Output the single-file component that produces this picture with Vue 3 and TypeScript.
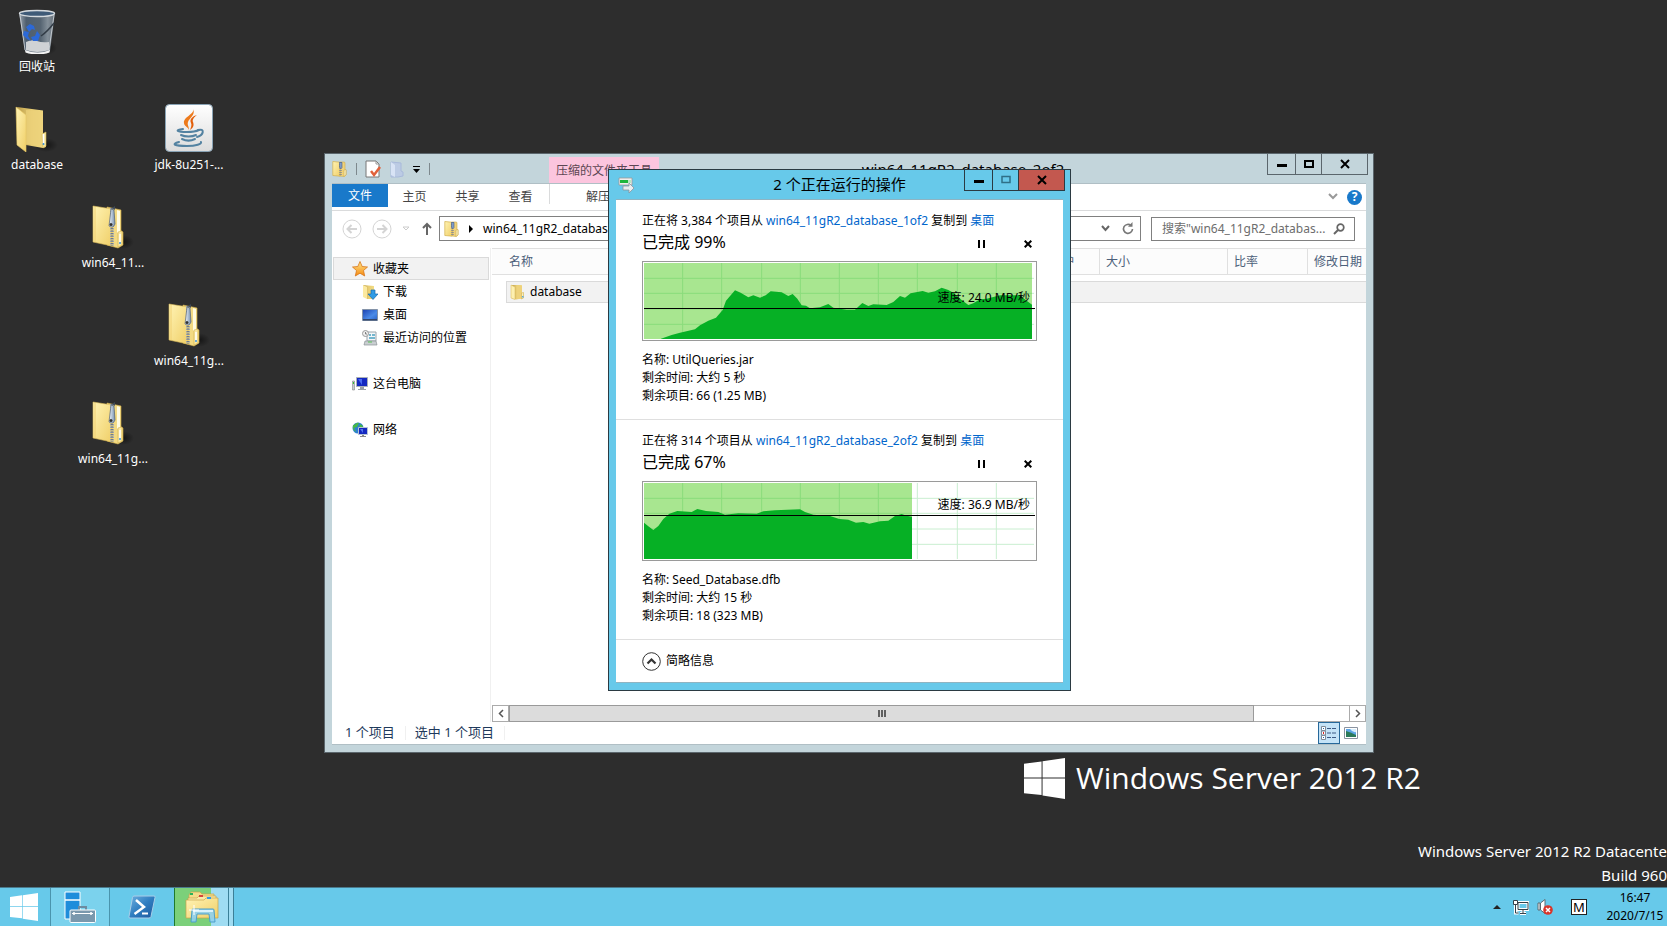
<script setup lang="ts">
import { ref } from 'vue'

interface DesktopItem {
  label: string
  icon: string
  place: string
}

interface CopyJob {
  id: string
  count: string
  source: string
  percent: number
  speed: string
  file: string
  time: string
  remaining: string
  filled: number
  average: number
  samples: [number, number][]
}

const desktopItems: DesktopItem[] = [
  { label: '回收站', icon: 'recycle', place: 'c1 r1' },
  { label: 'database', icon: 'folder', place: 'c1 r2' },
  { label: 'jdk-8u251-...', icon: 'java', place: 'c3 r2' },
  { label: 'win64_11...', icon: 'zip', place: 'c2 r3' },
  { label: 'win64_11g...', icon: 'zip', place: 'c3 r4' },
  { label: 'win64_11g...', icon: 'zip', place: 'c2 r5' },
]

const columns = [
  { name: '名称', cls: 'col-name' },
  { name: '密码保护', cls: 'col-protect' },
  { name: '大小', cls: 'col-size' },
  { name: '比率', cls: 'col-ratio' },
  { name: '修改日期', cls: 'col-date' },
]

// Chart space is 1170 x 228 units: ten columns by five rows.
const jobs: CopyJob[] = [
  {
    id: 'a',
    count: '3,384',
    source: 'win64_11gR2_database_1of2',
    percent: 99,
    speed: '24.0 MB/秒',
    file: 'UtilQueries.jar',
    time: '大约 5 秒',
    remaining: '66 (1.25 MB)',
    filled: 1164,
    average: 134,
    samples: [
      [51, 227], [83, 216], [108, 209], [153, 199], [168, 187], [193, 173], [216, 164], [236, 141],
      [246, 113], [273, 82], [290, 89], [313, 103], [328, 97], [348, 104], [365, 97], [380, 85],
      [413, 88], [433, 99], [446, 93], [460, 107], [473, 127], [486, 128], [498, 136], [528, 133],
      [553, 123], [568, 134], [608, 140], [633, 140], [655, 120], [673, 129], [688, 124], [728, 126],
      [748, 117], [768, 99], [783, 104], [800, 91], [836, 84], [853, 89], [873, 85], [893, 74],
      [913, 81], [928, 89], [953, 111], [973, 126], [988, 121], [1008, 109], [1028, 107],
      [1068, 97], [1128, 97], [1148, 113], [1164, 125],
    ],
  },
  {
    id: 'b',
    count: '314',
    source: 'win64_11gR2_database_2of2',
    percent: 67,
    speed: '36.9 MB/秒',
    file: 'Seed_Database.dfb',
    time: '大约 15 秒',
    remaining: '18 (323 MB)',
    filled: 804,
    average: 95,
    samples: [
      [0, 119], [13, 130], [28, 141], [43, 129], [58, 108], [76, 92], [100, 84], [143, 87],
      [160, 78], [186, 84], [223, 87], [243, 95], [283, 91], [338, 92], [358, 85], [393, 82],
      [468, 79], [483, 87], [508, 95], [558, 99], [586, 108], [613, 110], [636, 119], [658, 117],
      [676, 122], [708, 115], [733, 113], [753, 99], [773, 93], [788, 98], [804, 101],
    ],
  },
]

const gridX = [116, 233, 353, 469, 586, 703, 820, 940, 1057]
const gridY = [46, 91, 138, 184]
const search = ref('')

function area(job: CopyJob): string {
  const first = job.samples[0]
  const top = job.samples.map(([x, y]) => `${x},${y}`).join(' ')
  return `${first[0]},228 ${top} ${job.filled},228`
}
</script>

<template>
  <div class="screen">
    <svg class="defs" aria-hidden="true">
      <defs>
        <linearGradient id="gFront" x1="0" y1="0" x2="1" y2="1">
          <stop offset="0" stop-color="#fff3b4" /><stop offset="1" stop-color="#f0cf68" />
        </linearGradient>
        <linearGradient id="gBack" x1="0" y1="0" x2="1" y2="0">
          <stop offset="0" stop-color="#b99b4a" /><stop offset=".5" stop-color="#e8cd73" /><stop offset="1" stop-color="#f2dc86" />
        </linearGradient>
        <linearGradient id="gPull" x1="0" y1="0" x2="1" y2="0">
          <stop offset="0" stop-color="#f2f7fc" /><stop offset="1" stop-color="#7590b0" />
        </linearGradient>
        <linearGradient id="gBin" x1="0" y1="0" x2="1" y2="0">
          <stop offset="0" stop-color="#aab4be" /><stop offset=".2" stop-color="#526476" /><stop offset=".6" stop-color="#5b6b7a" /><stop offset=".8" stop-color="#8d9aa5" /><stop offset="1" stop-color="#68737e" />
        </linearGradient>
        <linearGradient id="gJava" x1="0" y1="0" x2="0" y2="1">
          <stop offset="0" stop-color="#ffffff" /><stop offset="1" stop-color="#dcdcdc" />
        </linearGradient>
        <linearGradient id="gScreen" x1="0" y1="0" x2="1" y2="1">
          <stop offset="0" stop-color="#1a3fae" /><stop offset=".6" stop-color="#4b8be8" /><stop offset="1" stop-color="#2860c8" />
        </linearGradient>
        <linearGradient id="gPs" x1="0" y1="0" x2="1" y2="1">
          <stop offset="0" stop-color="#6fb1e0" /><stop offset=".5" stop-color="#2f7dc0" /><stop offset="1" stop-color="#1c579c" />
        </linearGradient>
        <linearGradient id="gStar" x1="0" y1="0" x2="0" y2="1">
          <stop offset="0" stop-color="#ffe78a" /><stop offset="1" stop-color="#f58a12" />
        </linearGradient>
        <radialGradient id="gShade">
          <stop offset="0" stop-color="#000" stop-opacity=".55" /><stop offset="1" stop-color="#000" stop-opacity="0" />
        </radialGradient>
      </defs>
      <symbol id="folder" viewBox="0 0 48 48">
        <ellipse cx="33" cy="41" rx="12" ry="7" fill="url(#gShade)" />
        <path d="M4 3L30 6.500V29l3 1v13l-3 1-17-3z" fill="url(#gBack)" />
        <path d="M13 6l17 1v35l-17-2z" fill="#ecd27a" opacity=".7" />
        <path d="M29 30l4-2v14l-3 2z" fill="#f7e7a0" stroke="#d2b04e" stroke-width=".6" />
        <path d="M30.500 30v10" stroke="#fff" stroke-width="1.500" /><circle cx="30.500" cy="40" r="1" fill="#3a8fd0" />
        <path d="M3 3l10 8v37L4 41z" fill="url(#gFront)" stroke="#e5c663" stroke-width=".6" />
      </symbol>
      <symbol id="folder16" viewBox="0 0 16 16">
        <path d="M1.500 1h9.500l1 .5v13L6 15.500 1.500 14z" fill="url(#gBack)" />
        <path d="M6.500 1.500H12v13l-5.500.5z" fill="#eed27b" />
        <path d="M1 1l4 2v12.500L1 14z" fill="#fdf0b0" stroke="#dfc066" stroke-width=".6" />
        <path d="M11.500 9l2-.5v5.500l-2 1z" fill="#fbf0bd" stroke="#d2b04e" stroke-width=".6" />
        <path d="M12 12h1.500v1.500H12z" fill="#5aa9dc" />
      </symbol>
      <symbol id="zip16" viewBox="0 0 16 16">
        <path d="M8 1h4l1 .5v7l1 .5v5l-2 1.500-4-.5z" fill="#efd27b" stroke="#cfab4a" stroke-width=".6" />
        <path d="M.800.500L8 1.200v14L.8 14.500z" fill="url(#gFront)" stroke="#d3b04b" stroke-width=".7" />
        <path d="M8.500 1v14" stroke="#8d8f94" stroke-width="2.500" stroke-dasharray="1 1" />
        <path d="M7.500 1.500h2.500v5l-1 1-1.500-1z" fill="#7f9cc8" stroke="#48608a" stroke-width=".6" />
        <path d="M12 9l2-.5V14l-2 1.500z" fill="#fbf0bd" stroke="#cfab4a" stroke-width=".6" />
      </symbol>
      <symbol id="zip" viewBox="0 0 48 48">
        <ellipse cx="34" cy="40" rx="11" ry="7" fill="url(#gShade)" />
        <path d="M18 5l14 3v21l2 1v13l-5 3-11-3z" fill="#f3da82" stroke="#d3b04b" stroke-width=".6" />
        <path d="M28 8l3 1v21l-3 1z" fill="#fffbe0" />
        <path d="M4 4l19 3v37L4 40z" fill="url(#gFront)" stroke="#d9b957" stroke-width=".6" />
        <path d="M6 5v35" stroke="#f0d072" stroke-width="1" />
        <path d="M23 6v38" stroke="#9aa3ac" stroke-width="4" stroke-dasharray="1.500 1" />
        <path d="M23 6v38" stroke="#4e555e" stroke-width="1" stroke-dasharray="1 1.500" />
        <path d="M22 7l3 1 1 14q-2 5-6 2z" fill="url(#gPull)" stroke="#536273" stroke-width=".7" />
        <path d="M23 6l3-2v4z" fill="#3f4a57" /><circle cx="22" cy="22.500" r="1.500" fill="#333" />
        <path d="M29 30l4-1v14l-4 2z" fill="#fae9a4" stroke="#d3b04b" stroke-width=".6" />
        <path d="M31 32v10" stroke="#fff" stroke-width="1.500" /><circle cx="31" cy="41" r="1" fill="#3a8fd0" />
      </symbol>
      <symbol id="recycle" viewBox="0 0 48 48">
        <ellipse cx="33" cy="42" rx="11" ry="7" fill="url(#gShade)" />
        <path d="M6 7h36l-5 38q-13 5-25 0z" fill="url(#gBin)" opacity=".9" />
        <path d="M13 36q6-3 11-1t12 1v8q-12 4-23 0z" fill="#cfd2d5" />
        <path d="M12 44q13 5 25 0l-.5 2.500q-12 4-24 0z" fill="#f4f4f4" />
        <ellipse cx="24" cy="7.500" rx="17.500" ry="3" fill="#3f5b78" stroke="#d5dade" stroke-width="1.400" />
        <path d="M7 9l5 35M41 9l-5 35" stroke="#d5dade" stroke-width="1" opacity=".8" />
        <path d="M41 17Q34 26 28 30" stroke="#323c46" stroke-width="1.500" fill="none" />
        <g fill="#2c69d8"><path d="M13 21l4-3 4 2 1 4-3-1-3 3z" /><path d="M11 25l5 1-1 4 3 5-4-2-4-4z" /><path d="M20 35l-2-4 4-1 2-5 3 4-2 6z" /></g>
      </symbol>
      <symbol id="java" viewBox="0 0 48 48">
        <rect x=".5" y=".5" width="47" height="47" rx="4" fill="url(#gJava)" stroke="#89a3b5" />
        <path d="M28 5c2 5-10 8-9 14 0 3 4 4 5 7 0-4-2-5-1-8 1-4 8-7 5-13z" fill="#ed7a1c" />
        <path d="M32 11c-4 1-8 4-6 8 1 2 0 4-1 7 4-3 4-5 3-8-1-2 1-5 4-7z" fill="#e35f0a" />
        <g fill="none" stroke="#5382a1" stroke-width="2" stroke-linecap="round">
          <path d="M18 25c-9 1-6 3 4 3 6 0 10-1 12-2" /><path d="M33 26c7-2 6 5-1 7" />
          <path d="M16 31c4 2 11 2 15 0" /><path d="M17 35c4 2 9 2 13 0" />
          <path d="M14 38c-8 2-5 4 8 4 9 0 15-2 14-4" />
        </g>
      </symbol>
      <symbol id="winlogo" viewBox="0 0 42 42">
        <path d="M0 6l18-2.500V20H0zM19 3.300L42 0v20H19zM0 21h18v17L0 36zM19 21h23v21l-23-3.500z" fill="currentColor" />
      </symbol>
    </svg>

    <main class="desktop">
      <button v-for="(item, i) in desktopItems" :key="i" type="button" class="shortcut" :class="item.place">
        <svg class="big-icon"><use :href="'#' + item.icon" /></svg>
        <span>{{ item.label }}</span>
      </button>

      <div class="brand">
        <svg class="brand-logo"><use href="#winlogo" /></svg>
        <span>Windows Server 2012 R2</span>
      </div>
      <div class="edition">
        <div>Windows Server 2012 R2 Datacente</div>
        <div>Build 960</div>
      </div>

      <section class="explorer" aria-label="win64_11gR2_database_2of2">
        <header class="ex-title">
          <div class="quick">
            <svg class="icon16"><use href="#zip16" /></svg>
            <i class="divider"></i>
            <button type="button" aria-label="属性">
              <svg width="16" height="18" viewBox="0 0 16 18"><path d="M1 1h10l3 3v13H1z" fill="#fff" stroke="#777" /><path d="M11 1v3h3" fill="none" stroke="#999" /><path d="M6 11l3 4 6-8" fill="none" stroke="#e0603a" stroke-width="2.500" /></svg>
            </button>
            <button type="button" aria-label="新建文件夹">
              <svg width="16" height="18" viewBox="0 0 16 18"><path d="M2 2l10 1v8l2 1v4l-5 1H2z" fill="#bccbe4" stroke="#a9badb" /><path d="M2 2l4 3v12l-4-2z" fill="#d8e3f5" /></svg>
            </button>
            <button type="button" aria-label="自定义快速访问工具栏">
              <svg width="8" height="8" viewBox="0 0 8 8"><path d="M0 1h7v1H0zM0 4h7L3.500 8z" /></svg>
            </button>
            <i class="divider"></i>
          </div>
          <div class="context-tab">压缩的文件夹工具</div>
          <h1>win64_11gR2_database_2of2</h1>
          <div class="controls">
            <button type="button" class="b-min" aria-label="最小化"><svg width="10" height="10" viewBox="0 0 10 10"><path d="M0 5h10v3H0z" /></svg></button>
            <button type="button" class="b-max" aria-label="最大化"><svg width="10" height="10" viewBox="0 0 10 10"><path d="M1 2h8v6H1z" fill="none" stroke="#000" stroke-width="2" /></svg></button>
            <button type="button" class="b-close" aria-label="关闭"><svg width="10" height="10" viewBox="0 0 10 10"><path d="M1 1l8 8M9 1L1 9" stroke="#000" stroke-width="2" /></svg></button>
          </div>
        </header>

        <div class="ex-body">
          <nav class="ribbon">
            <button type="button" class="file-tab">文件</button>
            <button type="button" class="tab">主页</button>
            <button type="button" class="tab">共享</button>
            <button type="button" class="tab">查看</button>
            <button type="button" class="tab extract">解压缩</button>
            <span class="grow"></span>
            <button type="button" class="ribbon-toggle" aria-label="展开功能区"><svg width="10" height="8" viewBox="0 0 10 8"><path d="M1 1l4 4 4-4" fill="none" stroke="#999" stroke-width="2" /></svg></button>
            <button type="button" class="help" aria-label="帮助">?</button>
          </nav>

          <div class="navbar">
            <button type="button" class="round" aria-label="后退"><svg width="20" height="20" viewBox="0 0 20 20" fill="none" stroke="#d4d4d4"><circle cx="10" cy="10" r="9" /><path d="M15 10H6M9.500 6L5.500 10l4 4" stroke-width="2" /></svg></button>
            <button type="button" class="round" aria-label="前进"><svg width="20" height="20" viewBox="0 0 20 20" fill="none" stroke="#d4d4d4"><circle cx="10" cy="10" r="9" /><path d="M5 10h9M10.500 6l4 4-4 4" stroke-width="2" /></svg></button>
            <button type="button" class="recent" aria-label="最近浏览的位置"><svg width="8" height="6" viewBox="0 0 8 6"><path d="M1 1h6L4 4z" fill="none" stroke="#ccc" /></svg></button>
            <button type="button" class="up" aria-label="上移"><svg width="10" height="14" viewBox="0 0 10 14" fill="none" stroke="#666" stroke-width="2"><path d="M5 13V2M1 6l4-4 4 4" /></svg></button>
            <div class="address">
              <svg class="icon16"><use href="#zip16" /></svg>
              <svg class="crumb-arrow" width="5" height="8" viewBox="0 0 5 8"><path d="M0 0l4 4-4 4z" /></svg>
              <button type="button" class="crumb">win64_11gR2_database_2of2</button>
              <span class="grow"></span>
              <button type="button" aria-label="以前的位置"><svg width="10" height="8" viewBox="0 0 10 8"><path d="M1 1l3.500 4L8 1" fill="none" stroke="#666" stroke-width="2" /></svg></button>
              <button type="button" class="refresh" aria-label="刷新"><svg width="12" height="13" viewBox="0 0 12 13"><path d="M9 3.500A4.500 4.500 0 1 0 10.500 7" fill="none" stroke="#777" stroke-width="1.600" /><path d="M6 4.800h4.500V0z" fill="#777" /></svg></button>
            </div>
            <label class="search">
              <input v-model="search" type="text" aria-label="搜索" placeholder="搜索&quot;win64_11gR2_databas..." />
              <svg width="12" height="12" viewBox="0 0 12 12" fill="none" stroke="#666" stroke-width="1.700"><circle cx="7.500" cy="4.500" r="3.300" /><path d="M5 7L1 11" stroke-width="2" /></svg>
            </label>
          </div>

          <div class="ex-main">
            <aside class="tree">
              <a href="#" class="node top selected">
                <svg class="icon16" viewBox="0 0 16 16"><path d="M8 .5l2.200 5 5.300.5-4 3.500 1.200 5.500L8 12.200 3.300 15l1.200-5.500-4-3.500 5.300-.5z" fill="url(#gStar)" stroke="#d8761a" stroke-width=".8" /></svg>收藏夹</a>
              <a href="#" class="node">
                <svg class="icon16" viewBox="0 0 16 16"><path d="M1 1l11 1v13H5z" fill="url(#gBack)" /><path d="M1 1l4 2v12l-4-2z" fill="#fbe9a0" /><path d="M9 6h4v4h3l-5 5.500L6 10h3z" fill="#2f9be6" stroke="#1769aa" stroke-width=".7" /></svg>下载</a>
              <a href="#" class="node">
                <svg class="icon16" viewBox="0 0 16 16"><path d="M.5 2.500h15v11H.5z" fill="url(#gScreen)" stroke="#8493a8" /><path d="M1 12h14v1.500H1z" fill="#33466c" /></svg>桌面</a>
              <a href="#" class="node">
                <svg class="icon16" viewBox="0 0 16 16"><path d="M5 2h9v9H5z" fill="#f3f6f8" stroke="#9aa4ab" /><path d="M7 5h2M7 8h6M10 5h3" stroke="#4aa0c0" stroke-width="1.500" /><path d="M3 11l-1 4h13l-1-4z" fill="#c9ced1" stroke="#8b9297" stroke-width=".7" /><path d="M6 12h4" stroke="#57c157" /><circle cx="3.500" cy="3.500" r="3" fill="#eee" stroke="#999" /><path d="M3.500 2v2H5" fill="none" stroke="#555" stroke-width=".7" /></svg>最近访问的位置</a>
              <a href="#" class="node top group">
                <svg class="icon16" viewBox="0 0 16 16"><path d="M4.500 1.500h11v9h-11z" fill="#1428c0" stroke="#aab0b8" /><path d="M6 3l4 0v6z" fill="#4a6bf0" /><path d="M8 11h4v2h2v1H6v-1h2z" fill="#9aa0a6" /><path d="M.5 5h2v9h-2z" fill="#c6cbd0" stroke="#888" stroke-width=".6" /><path d="M1 6h1v2H1z" fill="#35c035" /></svg>这台电脑</a>
              <a href="#" class="node top group">
                <svg class="icon16" viewBox="0 0 16 16"><circle cx="6" cy="6" r="5.500" fill="#2d7fd2" /><path d="M2 3q3-3 5-2l-2 4-3 1 2 4q-4-2-3-7zM8 2l3 2-1 4-3-2z" fill="#48b848" /><path d="M6.500 5.500h9v7h-9z" fill="#1428c0" stroke="#b5c3d4" /><path d="M8 7h3v4z" fill="#5474f0" /><path d="M10 13h2v1h2v1H8v-1h2z" fill="#888" /></svg>网络</a>
            </aside>

            <div class="files">
              <table>
                <thead>
                  <tr><th v-for="col in columns" :key="col.name" scope="col" :class="col.cls">{{ col.name }}</th></tr>
                </thead>
                <tbody>
                  <tr>
                    <td class="name-cell"><div class="file-name"><svg class="icon16"><use href="#folder16" /></svg>database</div></td>
                    <td></td><td></td><td></td><td></td>
                  </tr>
                </tbody>
              </table>
              <div class="hscroll">
                <button type="button" aria-label="向左滚动"><svg width="6" height="9" viewBox="0 0 6 9"><path d="M5 1L1.500 4.500 5 8" fill="none" stroke="#555" stroke-width="1.500" /></svg></button>
                <div class="track"><div class="thumb"><i></i><i></i><i></i></div></div>
                <button type="button" aria-label="向右滚动"><svg width="6" height="9" viewBox="0 0 6 9"><path d="M1 1l3.500 3.500L1 8" fill="none" stroke="#555" stroke-width="1.500" /></svg></button>
              </div>
            </div>
          </div>

          <footer class="status">
            <span>1 个项目</span>
            <span>选中 1 个项目</span>
            <span class="grow"></span>
            <button type="button" class="view active" aria-label="详细信息"><svg width="16" height="14" viewBox="0 0 16 14"><g fill="#fff" stroke="#7c8a99"><path d="M.5.5h4v4h-4zM.5 5h4v4h-4zM.5 9.500h4v4h-4z" /></g><path d="M2 2h1v1H2zM2 11h1v1H2z" fill="#26a" /><path d="M2 6h1v2H2z" fill="#d22" /><path d="M6 2.500h4M11 2.500h4M6 7h4M11 7h4M6 11.500h4M11 11.500h4" stroke="#3d5a85" /></svg></button>
            <button type="button" class="view" aria-label="大缩略图"><svg width="14" height="12" viewBox="0 0 14 12"><path d="M.5.500h13v11H.5z" fill="#fff" stroke="#8a93a0" /><path d="M2 2h10v8H2z" fill="#5ca5e6" /><path d="M2 4q4 1 10 4v2H2z" fill="#2b7a5a" /><path d="M6 2h6v3q-3 1-6-3z" fill="#d8eefc" /></svg></button>
          </footer>
        </div>
      </section>

      <section class="dialog" role="dialog" aria-label="2 个正在运行的操作">
        <header class="dlg-title">
          <svg class="icon16" viewBox="0 0 16 16"><path d="M1 1h13v7H1z" fill="#eee" stroke="#999" stroke-width=".8" /><path d="M2 3h8v3H2z" fill="#1db53c" /><path d="M10 3h3v3h-3z" fill="#b9e8c0" /><path d="M5 9h6V6l5 5-5 5v-3H5z" fill="#e9edf0" stroke="#8b959d" stroke-width=".8" /></svg>
          <h2>2 个正在运行的操作</h2>
          <div class="controls">
            <button type="button" class="b-min" aria-label="最小化"><svg width="10" height="10" viewBox="0 0 10 10"><path d="M0 5h10v3H0z" /></svg></button>
            <button type="button" class="b-max" aria-label="最大化" disabled><svg width="10" height="10" viewBox="0 0 10 10"><path d="M1 1.500h8v6H1z" fill="none" stroke="#2f6f87" stroke-width="1.500" /></svg></button>
            <button type="button" class="b-close" aria-label="关闭"><svg width="10" height="10" viewBox="0 0 10 10"><path d="M1 1l8 8M9 1L1 9" stroke="#000" stroke-width="2" /></svg></button>
          </div>
        </header>
        <div class="dlg-body">
          <article v-for="job in jobs" :key="job.id" class="job">
            <p class="job-line">正在将 {{ job.count }} 个项目从 <a href="#">{{ job.source }}</a> 复制到 <a href="#">桌面</a></p>
            <div class="job-head">
              <strong>已完成 {{ job.percent }}%</strong>
              <button type="button" aria-label="暂停"><svg width="8" height="8" viewBox="0 0 8 8"><path d="M0 0h2v8H0zM5 0h2v8H5z" /></svg></button>
              <button type="button" aria-label="取消"><svg width="8" height="8" viewBox="0 0 8 8"><path d="M.7.700l6.600 6.600M7.300.700L.7 7.300" stroke="#000" stroke-width="2" /></svg></button>
            </div>
            <div class="chart">
              <svg viewBox="0 0 1170 228" preserveAspectRatio="none">
                <g stroke="#c9eed0" stroke-width="3">
                  <line v-for="x in gridX" :key="'x' + x" :x1="x" :x2="x" y1="0" y2="228" />
                  <line v-for="y in gridY" :key="'y' + y" x1="0" x2="1170" :y1="y" :y2="y" />
                </g>
                <rect :width="job.filled" height="228" fill="#a8e690" />
                <g stroke="#8adc7b" stroke-width="3">
                  <template v-for="x in gridX" :key="'gx' + x">
                    <line v-if="x < job.filled" :x1="x" :x2="x" y1="0" y2="228" />
                  </template>
                  <line v-for="y in gridY" :key="'gy' + y" x1="0" :x2="job.filled" :y1="y" :y2="y" />
                </g>
                <polygon :points="area(job)" fill="#06b025" />
              </svg>
              <div class="average" :style="{ top: (job.average / 228) * 100 + '%' }"><span>速度: {{ job.speed }}</span></div>
            </div>
            <dl>
              <div><dt>名称:</dt> <dd>{{ job.file }}</dd></div>
              <div><dt>剩余时间:</dt> <dd>{{ job.time }}</dd></div>
              <div><dt>剩余项目:</dt> <dd>{{ job.remaining }}</dd></div>
            </dl>
          </article>
          <button type="button" class="less">
            <svg width="19" height="19" viewBox="0 0 19 19" fill="none" stroke="#333"><circle cx="9.500" cy="9.500" r="8.800" /><path d="M5.500 11.500l4-4 4 4" stroke-width="2.200" /></svg>
            简略信息
          </button>
        </div>
      </section>
    </main>

    <footer class="taskbar">
      <button type="button" class="start" aria-label="开始"><svg width="28" height="28"><use href="#winlogo" /></svg></button>
      <button type="button" class="task server" aria-label="服务器管理器">
        <svg width="32" height="32" viewBox="0 0 32 32"><path d="M1 1h15v8H1zM1 9h15v19H1z" fill="#1f8ddb" stroke="#fff" /><path d="M15 19v-3h7v3" fill="none" stroke="#6d8ba0" stroke-width="2" /><rect x="6" y="19" width="25.500" height="12.500" rx="1" fill="#7a98ad" stroke="#fff" /><path d="M8 22.500h21" stroke="#fff" /><path d="M10 21v3M27 21v3" stroke="#fff" stroke-width="1.500" /></svg>
      </button>
      <button type="button" class="task shell" aria-label="Windows PowerShell">
        <svg width="28" height="24" viewBox="0 0 28 24"><path d="M6 1h20q1.500 0 1 1.500l-4 19q-.5 1.500-2 1.500H2q-1.500 0-1-1.500l3.500-19Q5 1 6 1z" fill="url(#gPs)" stroke="#a9cde8" /><path d="M8 5l8 7-9.500 7" fill="none" stroke="#fff" stroke-width="2.500" /><path d="M14 18.500h6" stroke="#fff" stroke-width="2" /></svg>
      </button>
      <button type="button" class="task files-task" aria-label="文件资源管理器">
        <svg width="34" height="32" viewBox="0 0 34 32"><path d="M4 4l2-3h9l2 2h12v8H4z" fill="#f4dc8a" stroke="#c9a54a" stroke-width=".7" /><path d="M5 2h3v2H5z" fill="#29b35a" /><path d="M3 7h9l2-2h17v6H3z" fill="#fbeaa8" stroke="#c9a54a" stroke-width=".7" /><path d="M14 4h4v2h-4z" fill="#d5463c" /><path d="M1 9h18l2-2h12v20H1z" fill="url(#gFront)" stroke="#c9a54a" stroke-width=".7" /><path d="M22 6h4v2h-4z" fill="#2f9be6" /><path d="M6 31l1-12q0-1 1-1h20q1 0 1 1l1 12h-5l-1-8H12l-1 8z" fill="#8fd0ee" fill-opacity=".9" stroke="#4c9fca" /><path d="M8 20h20" stroke="#d9f2fd" stroke-width="2" /><path d="M9 14v10M4 19h10" stroke="#fff" /></svg>
      </button>
      <i class="stack"></i>
      <span class="grow"></span>
      <button type="button" class="tray" aria-label="显示隐藏的图标"><svg width="8" height="4" viewBox="0 0 8 4"><path d="M4 0l4 4H0z" fill="#222" /></svg></button>
      <button type="button" class="tray" aria-label="网络">
        <svg width="16" height="16" viewBox="0 0 16 16" fill="none"><path d="M5 3.500h10v7H5zM10 11v3M7 14.500h6M2.500 6v8h3" stroke="#fff" stroke-width="3" /><path d="M5 3.500h10v7H5zM10 11v3M7 14.500h6M2.500 6v8h3" stroke="#35424a" /><path d="M.5 1.500h4v4h-4z" fill="#fff" stroke="#35424a" /></svg>
      </button>
      <button type="button" class="tray" aria-label="音量">
        <svg width="16" height="16" viewBox="0 0 16 16"><path d="M1 4h2v7H1zM3.500 4L8 .5v14L3.500 11z" fill="#fff" stroke="#5a6a72" /><circle cx="11" cy="11" r="4.800" fill="#d8352a" /><path d="M9 9l4 4M13 9l-4 4" stroke="#fff" stroke-width="1.500" /></svg>
      </button>
      <button type="button" class="ime" aria-label="输入法">M</button>
      <button type="button" class="clock"><span>16:47</span><span>2020/7/15</span></button>
    </footer>
  </div>
</template>

<style>
body {
  background: #2d2d2d;
}
</style>

<style scoped>
* {
  box-sizing: border-box;
}
.screen {
  display: flex;
  flex-direction: column;
  height: 100vh;
  overflow: hidden;
  background: #2d2d2d;
  color: #000;
  font: 12px/18px "Noto Sans", "Noto Sans CJK SC", sans-serif;
}
.defs {
  position: absolute;
  width: 0;
  height: 0;
}
button {
  display: flex;
  align-items: center;
  justify-content: center;
  padding: 0;
  border: 0;
  background: none;
  color: inherit;
  font: inherit;
}
svg {
  flex: none;
}
a {
  color: #0066cc;
  text-decoration: none;
}
h1, h2, p, dl, dd {
  margin: 0;
  font-weight: 400;
}
.grow {
  flex: 1;
}
.icon16 {
  width: 16px;
  height: 16px;
}
.desktop {
  position: relative;
  flex: 1;
  min-height: 0;
  overflow: hidden;
}

/* desktop icons on a free grid */
.shortcut {
  position: absolute;
  flex-direction: column;
  gap: 4px;
  width: 74px;
  color: #fff;
  white-space: nowrap;
}
.big-icon {
  width: 48px;
  height: 48px;
}
.c1 { left: 0; }
.c2 { left: 76px; }
.c3 { left: 152px; }
.r1 { top: 6px; }
.r2 { top: 104px; }
.r3 { top: 202px; }
.r4 { top: 300px; }
.r5 { top: 398px; }

.brand {
  position: absolute;
  left: 1024px;
  bottom: 87px;
  display: flex;
  align-items: center;
  gap: 11px;
  color: #fff;
  font: 400 30px/44px "Open Sans", "Noto Sans", sans-serif;
  white-space: nowrap;
}
.brand-logo {
  width: 41px;
  height: 41px;
}
.edition {
  position: absolute;
  right: 0;
  bottom: 0;
  color: #fff;
  font-size: 15px;
  line-height: 24px;
  text-align: right;
  white-space: nowrap;
}

/* explorer window */
.explorer {
  position: absolute;
  left: 324px;
  top: 153px;
  display: flex;
  flex-direction: column;
  width: 1050px;
  height: 600px;
  padding: 0 7px 7px;
  border: 1px solid #5b666c;
  background: #c3d5db;
}
.ex-title {
  display: flex;
  align-items: center;
  height: 29px;
}
.quick {
  display: flex;
  align-items: center;
  gap: 8px;
  width: 217px;
}
.divider {
  width: 1px;
  height: 12px;
  background: #7d888d;
}
.context-tab {
  align-self: flex-end;
  width: 110px;
  height: 26px;
  background: #fcc5de;
  color: #5d4653;
  line-height: 27px;
  text-align: center;
}
.ex-title h1 {
  flex: 1;
  font-size: 15px;
  text-align: center;
}
.controls {
  display: flex;
  align-self: flex-start;
  margin: -1px -2px 0 0;
}
.controls button {
  height: 22px;
  border: 1px solid #5b666c;
}
.controls button + button {
  border-left: 0;
}
.b-min { width: 29px; }
.b-max { width: 26px; }
.b-close { width: 46px; }
.ex-body {
  display: flex;
  flex: 1;
  flex-direction: column;
  min-height: 0;
  border-top: 1px solid #b0bfc5;
  border-bottom: 1px solid #b0bfc5;
  background: #fff;
}
.ribbon {
  display: flex;
  height: 27px;
  border-bottom: 1px solid #dadbdc;
  color: #444;
}
.file-tab {
  width: 56px;
  height: 23px;
  background: #1979ca;
  color: #fff;
}
.tab {
  width: 53px;
  height: 26px;
}
.extract {
  width: 110px;
  height: 20px;
  margin-left: 2px;
  padding-top: 6px;
  border: 1px solid #dadbdc;
  border-width: 0 1px;
}
.ribbon-toggle {
  width: 20px;
}
.help {
  align-self: center;
  width: 15px;
  height: 15px;
  margin: 0 4px;
  border-radius: 50%;
  background: #1979ca;
  color: #fff;
  font-weight: 700;
}
.navbar {
  display: flex;
  align-items: center;
  height: 37px;
  padding: 0 11px 2px 10px;
}
.round {
  margin-right: 10px;
}
.recent {
  width: 8px;
}
.up {
  width: 10px;
  margin: 0 7px 0 12px;
}
.address {
  display: flex;
  flex: 1;
  align-items: center;
  gap: 9px;
  height: 25px;
  padding: 0 6px 0 4px;
  border: 1px solid #808080;
}
.refresh {
  margin-left: 2px;
}
.search {
  display: flex;
  align-items: center;
  width: 204px;
  height: 24px;
  margin-left: 10px;
  padding: 0 9px 0 10px;
  border: 1px solid #808080;
}
.search input {
  flex: 1;
  min-width: 0;
  padding: 0;
  border: 0;
  outline: 0;
  background: none;
  font: inherit;
}
.search input::placeholder {
  color: #6d6d6d;
  opacity: 1;
}
.ex-main {
  display: flex;
  flex: 1;
  min-height: 0;
}
.tree {
  width: 159px;
  padding: 9px 1px 0;
  border-right: 1px solid #f0f0f0;
}
.node {
  display: flex;
  align-items: center;
  gap: 5px;
  height: 23px;
  padding-left: 29px;
  color: #000;
}
.node.top {
  padding-left: 19px;
}
.node.selected {
  border: 1px solid #dadada;
  background: #f2f2f2;
  padding-left: 18px;
}
.node.group {
  margin-top: 23px;
}
.files {
  display: flex;
  flex: 1;
  flex-direction: column;
  justify-content: space-between;
  min-width: 0;
  padding-left: 1px;
}
table {
  width: 100%;
  border-spacing: 0;
  table-layout: fixed;
}
th {
  height: 27px;
  padding: 0 6px;
  border: 1px solid #e0e0e0;
  border-left: 0;
  background: #fcfcfc;
  color: #4c607a;
  font-weight: 400;
  text-align: left;
  white-space: nowrap;
}
th:last-child {
  border-right: 0;
}
.col-name { padding-left: 17px; }
.col-protect { width: 80px; }
.col-size { width: 128px; }
.col-ratio { width: 80px; }
.col-date { width: 58px; }
tbody::before {
  content: "";
  display: block;
  height: 6px;
}
td {
  height: 22px;
  padding: 0;
  border: 1px solid #dadada;
  border-width: 1px 0;
  background: #f2f2f2;
}
.name-cell {
  padding-left: 14px;
  border: 0;
  background: none;
}
.file-name {
  display: flex;
  align-items: center;
  gap: 4px;
  height: 22px;
  padding-left: 3px;
  border: 1px solid #dadada;
  border-right: 0;
  background: #f2f2f2;
}
.hscroll {
  display: flex;
  height: 17px;
}
.hscroll button {
  width: 17px;
  border: 1px solid #ababab;
}
.track {
  flex: 1;
  border: 1px solid #ababab;
  border-width: 1px 0;
}
.thumb {
  display: flex;
  align-items: center;
  justify-content: center;
  gap: 1px;
  width: calc(100% - 95px);
  height: 17px;
  margin-top: -1px;
  border: 1px solid #9a9a9a;
  background: #dcdcdc;
}
.thumb i {
  width: 2px;
  height: 7px;
  background: #606060;
}
.status {
  display: flex;
  align-items: center;
  height: 22px;
  padding-left: 13px;
  color: #1e395b;
  font-size: 13px;
}
.status > span:not(.grow) {
  height: 14px;
  margin-right: 9px;
  padding-right: 10px;
  border-right: 1px solid #f0f0f0;
  line-height: 12px;
}
.view {
  width: 22px;
  height: 22px;
}
.view.active {
  border: 1px solid #26689a;
  background: #c4e3f7;
}
.view:last-child {
  margin-right: 4px;
}

/* copy dialog */
.dialog {
  position: absolute;
  left: 608px;
  top: 169px;
  width: 463px;
  padding: 0 7px 7px;
  border: 1px solid #2b3a42;
  background: #67c9ea;
}
.dlg-title {
  display: grid;
  grid-template-columns: 1fr auto 1fr;
  align-items: center;
  height: 29px;
}
.dlg-title .icon16 {
  margin-left: 2px;
}
.dlg-title h2 {
  padding-bottom: 2px;
  font-size: 15px;
}
.dlg-title .controls {
  justify-self: end;
}
.dialog .controls button {
  border-color: #2b3a42;
}
.dialog .b-close {
  background: #c3584f;
}
.dlg-body {
  border: 1px solid #8fb4c2;
  border-width: 1px 0;
  background: #fff;
}
.job {
  padding: 11px 26px 14px;
  border-bottom: 1px solid #dfdfdf;
}
.job-line {
  line-height: 20px;
  white-space: nowrap;
}
.job-head {
  display: flex;
  align-items: center;
  height: 22px;
  margin-bottom: 8px;
}
.job-head strong {
  flex: 1;
  font-size: 16px;
  font-weight: 400;
  line-height: 22px;
}
.job-head button {
  width: 20px;
  height: 20px;
  margin-left: 26px;
  padding-top: 4px;
}
.job-head button:first-of-type {
  margin-left: 0;
}
.job-head button:last-child {
  margin-right: -1px;
}
.chart {
  position: relative;
  height: 80px;
  padding: 1px 2px 1px 1px;
  border: 1px solid #9a9a9a;
}
.chart svg {
  display: block;
  width: 100%;
  height: 76px;
}
.average {
  position: absolute;
  left: 1px;
  right: 1px;
  border-top: 1px solid #000;
}
.average span {
  position: absolute;
  right: 5px;
  bottom: 2px;
  white-space: nowrap;
}
dl {
  margin-top: 10px;
}
dt, dd {
  display: inline;
}
.less {
  gap: 5px;
  height: 42px;
  margin-left: 26px;
}

/* taskbar */
.taskbar {
  display: flex;
  align-items: stretch;
  height: 39px;
  border-top: 1px solid #4a7a8c;
  background: #67c9ea;
}
.start {
  width: 50px;
  padding-right: 3px;
  color: #fff;
}
.task {
  border-left: 1px solid #4a94ad;
}
.server {
  width: 59px;
  background: #7bd2ed;
}
.shell {
  width: 65px;
}
.files-task {
  width: 55px;
  border-left-color: #1f7a2d;
  border-right: 1px solid #3b7f97;
  background: linear-gradient(90deg, #7bd07a 67%, #9fdcf2 67%);
}
.stack {
  width: 5px;
  border-right: 1px solid #3b7f97;
  background: #9fdcf2;
}
.tray {
  width: 16px;
  margin-right: 8px;
}
.ime {
  align-self: center;
  width: 16px;
  height: 16px;
  margin: 0 16px 0 10px;
  border: 1px solid #222;
  background: #fff;
  font-size: 13px;
}
.clock {
  flex-direction: column;
  width: 64px;
}
</style>
